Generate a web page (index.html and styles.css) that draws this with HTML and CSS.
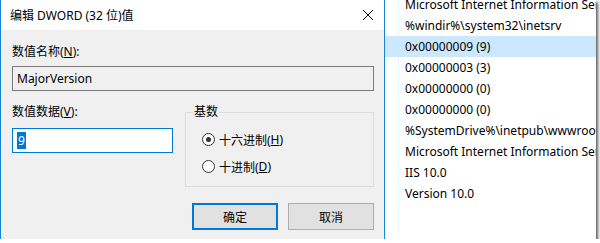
FILE: index.html
```html
<!DOCTYPE html>
<html lang="zh-CN">
<head>
<meta charset="UTF-8">
<link rel="stylesheet" href="styles.css">
<title>编辑 DWORD (32 位)值</title>
</head>
<body>
<div class="shot">
    <div class="dialog">
        <div class="titlebar">
            <span class="title">编辑 DWORD (32 位)值</span>
            <svg class="close" width="12" height="12" viewBox="0 0 12 12">
                <path d="M1 1 L11 11 M11 1 L1 11" stroke="#111" stroke-width="1"/>
            </svg>
        </div>
        <div class="body">
            <div class="label">数值名称(<u>N</u>):</div>
            <div class="input readonly">MajorVersion</div>
            <div class="row">
                <div class="data">
                    <div class="label">数值数据(<u>V</u>):</div>
                    <div class="input focus"><span class="sel">9</span></div>
                </div>
                <fieldset class="base">
                    <legend>基数</legend>
                    <div class="radio"><span class="dot on"></span>十六进制(<u>H</u>)</div>
                    <div class="radio"><span class="dot"></span>十进制(<u>D</u>)</div>
                </fieldset>
            </div>
            <div class="buttons">
                <div class="btn default">确定</div>
                <div class="btn">取消</div>
            </div>
        </div>
    </div>
    <div class="list">
        <div class="col">
            <div class="item">Microsoft Internet Information Services</div>
            <div class="item">%windir%\system32\inetsrv</div>
            <div class="item selected">0x00000009 (9)</div>
            <div class="item">0x00000003 (3)</div>
            <div class="item">0x00000000 (0)</div>
            <div class="item">0x00000000 (0)</div>
            <div class="item">%SystemDrive%\inetpub\wwwroot</div>
            <div class="item">Microsoft Internet Information Services</div>
            <div class="item">IIS 10.0</div>
            <div class="item">Version 10.0</div>
        </div>
    </div>
</div>
</body>
</html>
```

FILE: styles.css
```css
body {
    margin: 0;
    background: #ffffff;
    font-family: "Noto Sans", "Noto Sans CJK SC", sans-serif;
    font-size: 12px;
    color: #000;
}

.shot {
    display: flex;
    width: 596px;
    height: 239px;
    overflow: hidden;
    background: #fff;
    box-shadow: 2px 2px 3px rgba(0, 0, 0, 0.65);
}

/* dialog */
.dialog {
    width: 383px;
    flex: none;
    border-left: 1px solid #1883d7;
    border-right: 1px solid #1883d7;
    display: flex;
    flex-direction: column;
}

.titlebar {
    height: 30px;
    background: #fff;
    display: flex;
    align-items: center;
    justify-content: space-between;
    padding: 0 10px 0 9px;
}

.title {
    font-size: 12px;
}

.body {
    flex: 1;
    background: #f0f0f0;
    padding: 14px 10px 0 11px;
}

.label {
    line-height: 16px;
    height: 16px;
}

.input {
    box-sizing: border-box;
    height: 25px;
    border: 1px solid #7a7a7a;
    padding: 0 4px;
    line-height: 23px;
    margin-top: 6px;
}

.input.readonly {
    background: #f0f0f0;
}

.input.focus {
    background: #fff;
    border-color: #0078d7;
    margin-top: 8px;
}

.sel {
    background: #0078d7;
    color: #fff;
    padding: 0 1px;
}

.row {
    display: flex;
    gap: 12px;
    margin-top: 13px;
}

.data {
    width: 161px;
}

.base {
    margin: 0;
    padding: 6px 0 0 16px;
    width: 189px;
    height: 83px;
    box-sizing: border-box;
    border: 1px solid #dcdcdc;
}

.base legend {
    padding: 0 1px;
    margin-left: -9px;
    line-height: 16px;
}

.radio {
    display: flex;
    align-items: center;
    height: 27px;
}

.dot {
    width: 11px;
    height: 11px;
    border: 1px solid #333;
    border-radius: 50%;
    background: #fff;
    margin-right: 4px;
    position: relative;
}

.dot.on::after {
    content: "";
    position: absolute;
    left: 3px;
    top: 3px;
    width: 5px;
    height: 5px;
    border-radius: 50%;
    background: #333;
}

.buttons {
    display: flex;
    justify-content: flex-end;
    gap: 10px;
    margin-top: 16px;
}

.btn {
    box-sizing: border-box;
    width: 86px;
    height: 27px;
    background: #e1e1e1;
    border: 1px solid #adadad;
    display: flex;
    align-items: center;
    justify-content: center;
}

.btn.default {
    border: 2px solid #0078d7;
}

/* registry list */
.list {
    flex: 1;
    padding-left: 13px;
    overflow: hidden;
}

.col {
    border-left: 1px solid #eaf2fb;
    height: 100%;
    margin-top: -6px;
}

.item {
    height: 21px;
    line-height: 21px;
    white-space: nowrap;
    margin-left: -14px;
    padding-left: 20px;
}

.item.selected {
    background: #cce8ff;
}
```
